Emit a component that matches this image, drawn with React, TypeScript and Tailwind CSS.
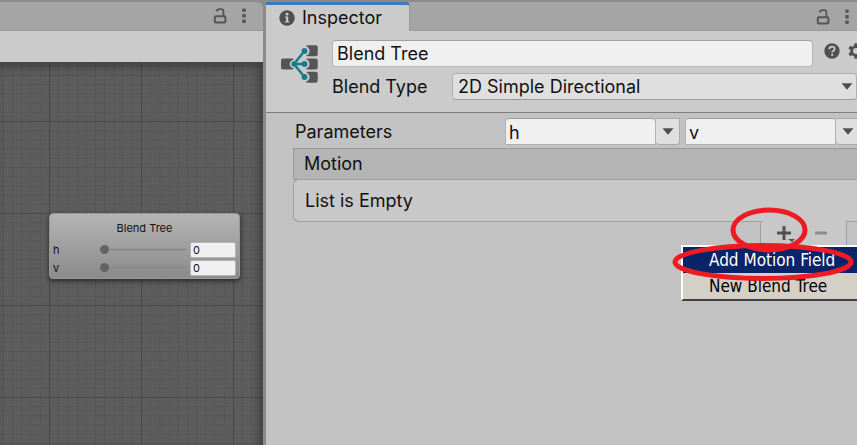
import React, { useState } from 'react';

function LockIcon() {
  return (
    <svg width="14" height="16" viewBox="0 0 14 16" fill="none" stroke="#555" strokeWidth="2">
      <rect x="1.8" y="8.2" width="10.6" height="6.2" rx="1" />
      <path d="M10.4 8V3.4C10.4 2 9.6 1.2 8.2 1.2H6.4C5 1.2 4 1.9 3.6 3.4" strokeWidth="1.8" />
    </svg>
  );
}

function DotsIcon() {
  return (
    <svg width="4" height="16" viewBox="0 0 4 16" fill="#555">
      <rect x="0.2" y="0.4" width="3.6" height="3.4" rx="1" />
      <rect x="0.2" y="6" width="3.6" height="3.4" rx="1" />
      <rect x="0.2" y="11.6" width="3.6" height="3.4" rx="1" />
    </svg>
  );
}

function InfoIcon() {
  return (
    <svg width="16" height="16" viewBox="0 0 16 16">
      <circle cx="8" cy="8" r="7.7" fill="#505050" />
      <path d="M6.2 6.6h3v4.8h1.2v1.2H5.8v-1.2h1.3V7.8h-.9z" fill="#cbcbcb" />
      <circle cx="8" cy="4.2" r="1.4" fill="#cbcbcb" />
    </svg>
  );
}

function HelpIcon() {
  return (
    <svg width="16" height="16" viewBox="0 0 16 16">
      <circle cx="8" cy="8" r="7.7" fill="#505050" />
      <path d="M5.4 6.2C5.4 4.6 6.5 3.7 8 3.7s2.6.9 2.6 2.2c0 1.7-2.4 1.8-2.4 3.7" fill="none" stroke="#cbcbcb" strokeWidth="1.8" />
      <rect x="7.2" y="10.8" width="2" height="2" fill="#cbcbcb" />
    </svg>
  );
}

function GearIcon() {
  return (
    <svg width="16" height="16" viewBox="0 0 16 16">
      <g fill="#505050">
        <rect x="6.3" y="0.3" width="3.4" height="15.4" rx="0.6" />
        <rect x="6.3" y="0.3" width="3.4" height="15.4" rx="0.6" transform="rotate(60 8 8)" />
        <rect x="6.3" y="0.3" width="3.4" height="15.4" rx="0.6" transform="rotate(120 8 8)" />
        <circle cx="8" cy="8" r="5.7" />
      </g>
      <circle cx="8" cy="8" r="3" fill="#cbcbcb" />
    </svg>
  );
}

function BlendTreeIcon() {
  return (
    <svg width="38" height="38" viewBox="0 0 38 38">
      <g fill="#555">
        <rect x="0" y="13.5" width="13" height="11" rx="2" />
        <rect x="24.5" y="0.2" width="12.2" height="11" rx="2" />
        <rect x="24.5" y="13.5" width="12.2" height="11" rx="2" />
        <rect x="24.5" y="26.8" width="12.2" height="11" rx="2" />
      </g>
      <g stroke="#cbcbcb" strokeWidth="5" fill="#cbcbcb">
        <path d="M13 19L23.5 6M13 19H23.5M13 19L23.5 32" />
        <circle cx="23.5" cy="6" r="2.6" />
        <circle cx="23.5" cy="19" r="2.6" />
        <circle cx="23.5" cy="32" r="2.6" />
        <circle cx="13" cy="19" r="1.8" />
      </g>
      <g stroke="#177d8d" strokeWidth="2.5" fill="#177d8d">
        <path d="M13 19L23.5 6M13 19H23.5M13 19L23.5 32" />
        <circle cx="23.5" cy="6" r="1.7" />
        <circle cx="23.5" cy="19" r="1.7" />
        <circle cx="23.5" cy="32" r="1.7" />
        <circle cx="13" cy="19" r="1.4" />
      </g>
    </svg>
  );
}

function Arrow() {
  return (
    <svg width="12" height="7" viewBox="0 0 12 7">
      <path d="M0.5 0.2h11L6 6.8z" fill="#50504a" />
    </svg>
  );
}

function PanelButtons() {
  return (
    <div className="ml-auto flex items-center gap-[15px] pr-2">
      <button type="button" aria-label="Lock"><LockIcon /></button>
      <button type="button" aria-label="Panel menu"><DotsIcon /></button>
    </div>
  );
}

function Grid() {
  const minor = [1, 2, 3, 4, 5, 6, 7, 8, 9];
  return (
    <svg className="absolute inset-0 h-full w-full" aria-hidden="true">
      <defs>
        <pattern id="grid" x="49" y="59" width="92" height="92" patternUnits="userSpaceOnUse">
          {minor.map((i) => (
            <path key={i} d={`M${i * 9.2 + 0.5} 0V92M0 ${i * 9.2 + 0.5}H92`} stroke="#565656" strokeWidth="1" />
          ))}
          <path d="M0.5 0V92M0 0.5H92" stroke="#494949" strokeWidth="1" />
        </pattern>
      </defs>
      <rect width="100%" height="100%" fill="#5d5d5d" />
      <rect width="100%" height="100%" fill="url(#grid)" />
    </svg>
  );
}

function NodeParam({ name }: { name: string }) {
  const [value, setValue] = useState('0');
  return (
    <div className="flex h-4 items-center">
      <label htmlFor={`node-${name}`} className="w-[47px]">{name}</label>
      <input
        type="range"
        min="0"
        max="1"
        step="0.01"
        aria-label={`${name} slider`}
        value={value}
        onChange={(e) => setValue(e.target.value)}
        className="mb-0.5 h-[9px] w-[87px] appearance-none bg-transparent [&::-webkit-slider-runnable-track]:h-[9px] [&::-webkit-slider-runnable-track]:bg-linear-to-b [&::-webkit-slider-runnable-track]:from-transparent [&::-webkit-slider-runnable-track]:from-35% [&::-webkit-slider-runnable-track]:via-[#868686] [&::-webkit-slider-runnable-track]:via-50% [&::-webkit-slider-runnable-track]:to-transparent [&::-webkit-slider-runnable-track]:to-65% [&::-webkit-slider-thumb]:size-[9px] [&::-webkit-slider-thumb]:appearance-none [&::-webkit-slider-thumb]:rounded-full [&::-webkit-slider-thumb]:bg-[#646464]"
      />
      <input
        id={`node-${name}`}
        value={value}
        onChange={(e) => setValue(e.target.value)}
        className="ml-auto h-4 w-[46px] rounded-xs border border-[#b5b5b5] bg-[#f0f0f0] px-0.5 outline-none"
      />
    </div>
  );
}

function BlendTreeNode() {
  return (
    <div className="absolute top-[151px] left-[49px] w-[191px] rounded-sm border border-[#999] bg-linear-to-b from-[#b4b4b4] to-[#8b8b8b] pr-[3px] pb-0.5 pl-[3px] text-[11px] leading-4 text-[#111] shadow-[0_2px_5px_rgba(0,0,0,0.6)]">
      <div className="pt-1.5 pb-1.5 text-center">Blend Tree</div>
      <div className="flex flex-col gap-0.5">
        <NodeParam name="h" />
        <NodeParam name="v" />
      </div>
    </div>
  );
}

function ParamField({ name }: { name: string }) {
  return (
    <div className="flex h-[27px] w-[175px] shrink-0">
      <input
        aria-label={`Parameter ${name}`}
        defaultValue={name}
        className="w-[151px] rounded-t-sm border border-[#b0b0b0] border-t-[#a0a0a0] bg-[#f0f0f0] px-[3px] pt-0.5 outline-none"
      />
      <button
        type="button"
        aria-label={`Choose parameter ${name}`}
        className="flex w-6 items-center justify-center rounded-b-sm border border-l-0 border-[#aaa] bg-[#dfdfdf]"
      >
        <Arrow />
      </button>
    </div>
  );
}

function AddMenu() {
  return (
    <div className="absolute top-[23px] right-0 flex w-44 flex-col border-t-2 border-b-2 border-l-2 border-t-white border-b-[#404040] border-l-white bg-[#d4d0c8] pb-px font-['DejaVu_Sans_Condensed','DejaVu_Sans',sans-serif] text-[17px] leading-6 text-black">
      <button type="button" className="h-[26px] bg-[#0a246a] pl-[26px] text-left text-white">Add Motion Field</button>
      <button type="button" className="h-[25px] pl-[26px] text-left">New Blend Tree</button>
      <svg className="pointer-events-none absolute top-[-42px] right-0" width="190" height="84" viewBox="0 0 190 84" fill="none" stroke="#ed1c24" strokeWidth="5">
        <ellipse cx="102" cy="25" rx="36" ry="20" />
        <ellipse cx="96" cy="57" rx="88" ry="16.5" />
      </svg>
    </div>
  );
}

export default function App() {
  return (
    <div className="flex min-h-screen gap-[3px] overflow-hidden bg-[#8a8a8a] pt-0.5 font-[Inter,sans-serif] text-lg leading-6 text-[#111]">
      <section className="flex w-[263px] shrink-0 flex-col">
        <div className="flex h-[29px] rounded-tr-md border-b border-[#999] bg-[#a5a5a5] pr-[9px]">
          <PanelButtons />
        </div>
        <div className="h-[31px] bg-[#cbcbcb]" />
        <div className="relative flex-1">
          <Grid />
          <div className="absolute inset-0 shadow-[inset_-4px_5px_8px_rgba(0,0,0,0.3)]" />
          <BlendTreeNode />
        </div>
      </section>

      <section className="flex min-w-0 flex-1 flex-col overflow-hidden bg-[#c2c2c2]">
        <div className="flex h-[29px] bg-[#a5a5a5] shadow-[inset_0_-1px_0_#999]">
          <div className="flex w-36 items-center gap-[7px] rounded-tr-sm border-t-3 border-r border-t-[#3a79c8] border-r-[#999] bg-[#cbcbcb] pl-[13px]">
            <InfoIcon />
            <h1>Inspector</h1>
          </div>
          <PanelButtons />
        </div>

        <header className="flex border-b border-[#7f7f7f] bg-[#cbcbcb] pt-[9px] pb-3 pl-[15px]">
          <div className="w-[51px] shrink-0 pt-[5px]">
            <BlendTreeIcon />
          </div>
          <div className="flex min-w-0 flex-1 flex-col gap-1.5">
            <div className="-mr-[7px] flex items-center">
              <input
                aria-label="Name"
                defaultValue="Blend Tree"
                className="h-[27px] min-w-0 flex-1 rounded-sm border border-[#b5b5b5] border-t-[#a0a0a0] bg-[#f0f0f0] px-1 outline-none"
              />
              <div className="flex shrink-0 gap-2 pb-1.5 pl-[11px]">
                <button type="button" aria-label="Help"><HelpIcon /></button>
                <button type="button" aria-label="Settings"><GearIcon /></button>
              </div>
            </div>
            <div className="flex items-center">
              <label htmlFor="blend-type" className="w-[120px] shrink-0">Blend Type</label>
              <div className="relative flex flex-1 items-center">
                <select
                  id="blend-type"
                  className="h-[27px] w-full appearance-none rounded-sm border border-[#b0b0b0] border-b-[#999] bg-[#dfdfdf] px-[5px] outline-none"
                >
                  <option>2D Simple Directional</option>
                </select>
                <div className="pointer-events-none absolute right-1">
                  <Arrow />
                </div>
              </div>
            </div>
          </div>
        </header>

        <div className="pt-[5px] pl-[27px]">
          <div className="flex items-center gap-[5px] pb-[3px] pl-0.5">
            <span className="w-[205px] shrink-0">Parameters</span>
            <ParamField name="h" />
            <ParamField name="v" />
          </div>
          <h2 className="border-t border-b border-l border-[#999] bg-[#b4b4b4] py-0.5 pl-2.5 leading-[26px]">Motion</h2>
          <div className="-mt-px rounded-l-md border border-r-0 border-[#a0a0a0] bg-[#c8c8c8] pt-2 pb-[7px] pl-[11px] leading-[26px]">List is Empty</div>
          <div className="relative flex h-7 justify-end pr-2.5">
            <div className="-mt-px flex w-[87px] items-start gap-5 rounded-tl-sm border-r border-l border-[#a0a0a0] bg-[#c8c8c8] pt-1 pl-[15px]">
              <button type="button" aria-label="Add motion">
                <svg width="19" height="17" viewBox="0 0 19 17">
                  <path d="M8 1v14M1 8h14" stroke="#505050" strokeWidth="3" />
                  <path d="M12 14h7l-3 3z" fill="#505050" />
                </svg>
              </button>
              <button type="button" aria-label="Remove motion">
                <svg width="12" height="17" viewBox="0 0 12 17">
                  <path d="M0 8h12" stroke="#8c8c8c" strokeWidth="3" />
                </svg>
              </button>
            </div>
            <AddMenu />
          </div>
        </div>
      </section>
    </div>
  );
}
